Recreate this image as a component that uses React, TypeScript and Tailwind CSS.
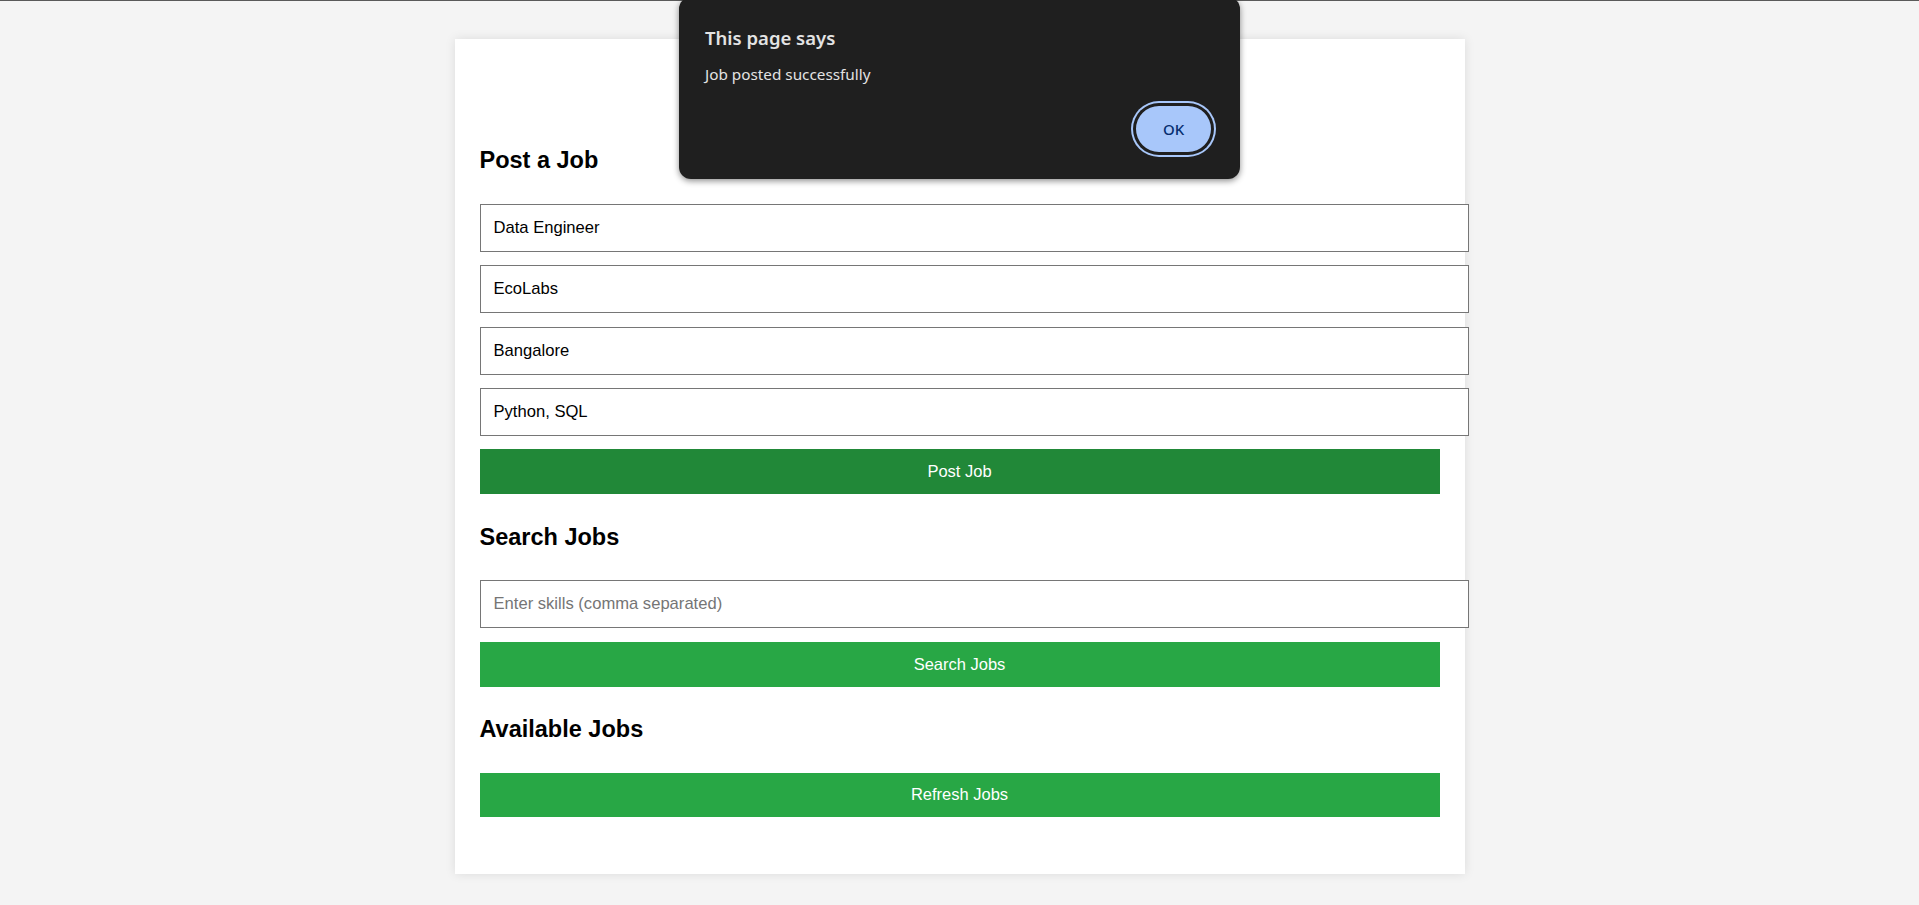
import { useState } from "react";

const fields = ["Data Engineer", "EcoLabs", "Bangalore", "Python, SQL"];

const inputCls =
  "block w-[989px] h-[48px] px-[13px] border border-[#767676] bg-white text-[16.6px] text-black placeholder:text-[#757575] outline-none";

const btnCls =
  "block w-[960px] h-[44.6px] text-white text-[16.5px] text-center";

function AlertDialog({ onClose }: { onClose: () => void }) {
  return (
    <div
      className="absolute left-[679px] top-[-4px] w-[561px] h-[182px] rounded-[12px] bg-[#1f1f1f] shadow-[0_2px_6px_rgba(0,0,0,0.45)] px-[26px] pt-[28px]"
      style={{ fontFamily: '"Noto Sans", "Open Sans", sans-serif' }}
    >
      <div className="text-[18.5px] font-semibold text-[#e3e3e3] leading-[26px]">This page says</div>
      <div className="mt-[12px] text-[15.3px] text-[#e3e3e3] leading-[22px]">Job posted successfully</div>
      <div className="flex justify-end mt-[18px]">
        <button
          onClick={onClose}
          className="w-[81px] h-[52px] rounded-full bg-[#a8c7fa] text-[#062e6f] text-[15px] font-medium shadow-[inset_0_0_0_3px_#1f1f1f,inset_0_0_0_4px_#a8c7fa,0_0_0_2px_#a8c7fa]"
        >
          OK
        </button>
      </div>
    </div>
  );
}

export default function App() {
  const [open, setOpen] = useState(true);
  return (
    <div
      className="relative min-h-[905px] bg-[#f4f4f4] border-t border-[#5a5a5a] pt-[38px]"
      style={{ fontFamily: '"Liberation Sans", Arial, sans-serif' }}
    >
      <div className="mx-auto w-[1010px] bg-white px-[25px] pt-[107.5px] pb-[57px] shadow-[0_0_10px_rgba(0,0,0,0.1)]">
        <h2 className="text-[23.5px] font-bold text-black leading-[27.6px] mb-[30px]">Post a Job</h2>
        <div className="flex flex-col gap-[13.3px]">
          {fields.map((f) => (
            <input key={f} className={inputCls} defaultValue={f} />
          ))}
          <button className={btnCls + " bg-[#218838]"}>Post Job</button>
        </div>

        <h2 className="mt-[29.8px] text-[23.5px] font-bold text-black leading-[27.6px] mb-[29.2px]">Search Jobs</h2>
        <div className="flex flex-col gap-[13.7px]">
          <input className={inputCls} placeholder="Enter skills (comma separated)" />
          <button className={btnCls + " bg-[#28a745]"}>Search Jobs</button>
        </div>

        <h2 className="mt-[28.8px] text-[23.5px] font-bold text-black leading-[27.6px] mb-[29.4px]">Available Jobs</h2>
        <button className={btnCls + " bg-[#28a745]"}>Refresh Jobs</button>
      </div>
      {open && <AlertDialog onClose={() => setOpen(false)} />}
    </div>
  );
}
